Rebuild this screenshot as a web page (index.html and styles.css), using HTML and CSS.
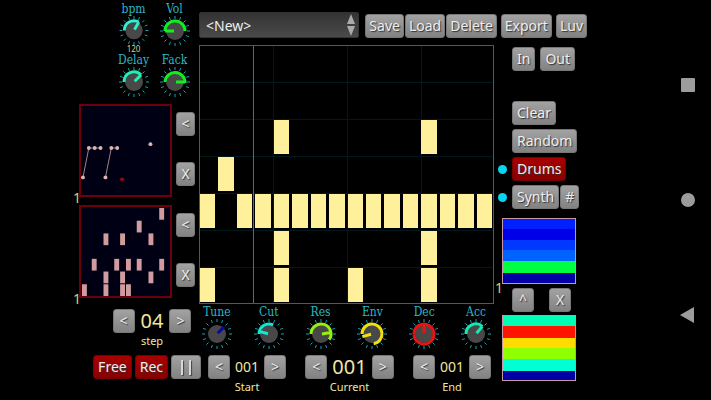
FILE: index.html
```html
<!DOCTYPE html>
<html lang="en">
<head>
    <meta charset="UTF-8">
    <meta name="viewport" content="width=device-width, initial-scale=1.0">
    <title>Step Sequencer</title>
    <link rel="stylesheet" href="styles.css">
</head>
<body>
    <div class="app">
        <section class="left">
            <div class="knobs knobs-master" id="master-knobs"></div>

            <div class="pad-row">
                <div class="pad">
                    <svg viewBox="0 0 91 91">
                        <path class="note-line" d="M2 73L8 43H20M25 73L31 43H37"/>
                        <g class="note-dot">
                            <circle cx="2" cy="73" r="2"/><circle cx="8" cy="43" r="2"/>
                            <circle cx="14" cy="43" r="2"/><circle cx="20" cy="43" r="2"/>
                            <circle cx="25" cy="73" r="2"/><circle cx="31" cy="43" r="2"/>
                            <circle cx="37" cy="43" r="2"/><circle cx="71" cy="39" r="2"/>
                        </g>
                        <circle class="note-red" cx="42" cy="75" r="2"/>
                    </svg>
                    <span class="page-number">1</span>
                </div>
                <div class="pad-buttons">
                    <button class="button small">&lt;</button>
                    <button class="button small">X</button>
                </div>
            </div>

            <div class="pad-row">
                <div class="pad">
                    <svg viewBox="0 0 91 91" id="drum-preview"></svg>
                    <span class="page-number">1</span>
                </div>
                <div class="pad-buttons">
                    <button class="button small">&lt;</button>
                    <button class="button small">X</button>
                </div>
            </div>

            <div class="counter step-counter">
                <div class="counter-row">
                    <button class="button small">&lt;</button>
                    <output class="big">04</output>
                    <button class="button small">&gt;</button>
                </div>
                <span class="caption">step</span>
            </div>

            <div class="transport">
                <button class="button button-red">Free</button>
                <button class="button button-red">Rec</button>
                <button class="button pause" aria-label="Pause"><i></i><i></i></button>
            </div>
        </section>

        <main class="main">
            <div class="topbar">
                <div class="select-box">
                    <select aria-label="Preset">
                        <option>&lt;New&gt;</option>
                    </select>
                    <svg viewBox="0 0 8 24"><path d="M4 1L8 11H0ZM4 23L8 13H0Z"/></svg>
                </div>
                <div class="file-buttons">
                    <button class="button">Save</button>
                    <button class="button">Load</button>
                    <button class="button">Delete</button>
                </div>
                <button class="button">Export</button>
                <button class="button">Luv</button>
            </div>

            <div class="content">
                <section class="center">
                    <div class="sequencer">
                        <div class="cells" id="cells"></div>
                        <div class="playhead"></div>
                    </div>
                    <div class="knobs knobs-synth" id="synth-knobs"></div>
                    <div class="counters">
                        <div class="counter">
                            <div class="counter-row">
                                <button class="button small">&lt;</button>
                                <output>001</output>
                                <button class="button small">&gt;</button>
                            </div>
                            <span class="caption">Start</span>
                        </div>
                        <div class="counter">
                            <div class="counter-row">
                                <button class="button small">&lt;</button>
                                <output class="big">001</output>
                                <button class="button small">&gt;</button>
                            </div>
                            <span class="caption">Current</span>
                        </div>
                        <div class="counter">
                            <div class="counter-row">
                                <button class="button small">&lt;</button>
                                <output>001</output>
                                <button class="button small">&gt;</button>
                            </div>
                            <span class="caption">End</span>
                        </div>
                    </div>
                </section>

                <aside class="side">
                    <div class="side-row io">
                        <button class="button">In</button>
                        <button class="button">Out</button>
                    </div>
                    <div class="side-row"><button class="button">Clear</button></div>
                    <div class="side-row"><button class="button">Random</button></div>
                    <div class="side-row active"><button class="button button-red">Drums</button></div>
                    <div class="side-row joined active">
                        <button class="button">Synth</button>
                        <button class="button">#</button>
                    </div>
                    <div class="bands bands-cold"><span class="page-number">1</span></div>
                    <div class="band-buttons">
                        <button class="button small">^</button>
                        <button class="button small">X</button>
                    </div>
                    <div class="bands bands-warm"></div>
                </aside>
            </div>
        </main>
    </div>

    <nav class="system-nav">
        <button aria-label="Recent"><svg viewBox="0 0 16 16"><rect x="1" y="1" width="14" height="14" rx="1"/></svg></button>
        <button aria-label="Home"><svg viewBox="0 0 16 16"><circle cx="8" cy="8" r="7"/></svg></button>
        <button aria-label="Back"><svg viewBox="0 0 16 16"><path d="M0 8L14 0V16Z"/></svg></button>
    </nav>

    <script src="script.js"></script>
</body>
</html>
```
FILE: styles.css
```css
* {
    box-sizing: border-box;
}

body {
    margin: 0;
    min-height: 100vh;
    display: flex;
    background-color: #000;
    font-family: "Noto Sans", "Open Sans", sans-serif;
    font-size: 14px;
    color: #f0e6a0;
}

.app {
    flex: 1;
    display: flex;
    padding: 0 75px 0 79px;
}

/* Buttons */
.button {
    height: 24px;
    padding: 0 4px;
    border: 1px solid #777;
    border-radius: 3px;
    background: linear-gradient(#a2a2a2, #828282);
    color: #eee;
    font-family: inherit;
    font-size: 14px;
    line-height: 20px;
    text-shadow: 1px 1px 1px #333;
    cursor: pointer;
}

.button.small {
    width: 22px;
    padding: 0;
}

.button-red {
    background: linear-gradient(#a80000, #880000);
    border-color: #780000;
}

/* Left column */
.left {
    width: 120px;
    flex: none;
    display: flex;
    flex-direction: column;
}

.knobs {
    display: grid;
}

.knobs-master {
    grid-template-columns: 41px 41px;
    grid-auto-rows: 51px;
    justify-content: end;
    padding: 2px 4px 0 0;
}

.knob {
    position: relative;
    display: flex;
    flex-direction: column;
    align-items: center;
    font-family: "DejaVu Serif Condensed", "DejaVu Serif", serif;
    font-size: 12px;
    line-height: 14px;
    color: #2cb6c8;
}

.knob svg {
    width: 30px;
    height: 30px;
}

.knob input {
    position: absolute;
    inset: 14px 0 auto 0;
    width: 100%;
    height: 30px;
    margin: 0;
    opacity: 0;
    cursor: pointer;
}

.knob output {
    font-family: "Noto Sans", sans-serif;
    font-size: 8px;
    line-height: 8px;
    color: #d8ce90;
}

.tick {
    stroke: #14a6b8;
}

.dial {
    fill: #484848;
}

.arc {
    fill: none;
    stroke-width: 3;
}

.pad-row {
    display: flex;
    gap: 4px;
    margin-bottom: 8px;
}

.pad {
    position: relative;
    width: 93px;
    height: 93px;
    border: 2px solid #6c000c;
    background-color: #000014;
}

.pad svg {
    display: block;
}

.note-line {
    fill: none;
    stroke: #a88488;
}

.note-dot {
    fill: #dcb4b4;
}

.note-red {
    fill: #a00018;
}

.drum-note {
    fill: #d09ca0;
}

.page-number {
    position: absolute;
    right: 100%;
    bottom: -10px;
    font-size: 14px;
    line-height: 14px;
    color: #d8ce80;
}

.pad-buttons {
    display: flex;
    flex-direction: column;
    gap: 26px;
    padding-top: 8px;
}

.pad-buttons .small {
    width: 19px;
}

.counter {
    display: flex;
    flex-direction: column;
    align-items: center;
}

.counter-row {
    display: flex;
    align-items: center;
    gap: 5px;
    height: 24px;
}

.counter output {
    font-size: 14px;
    line-height: 24px;
}

.counter output.big {
    font-size: 20px;
}

.caption {
    font-size: 11px;
    line-height: 16px;
}

.step-counter {
    margin: 3px 0 0 26px;
}

.step-counter .counter-row {
    gap: 6px;
}

.transport {
    display: flex;
    justify-content: flex-end;
    gap: 3px;
    margin: 6px -2px 0 0;
}

.pause {
    display: flex;
    justify-content: center;
    align-items: center;
    gap: 6px;
    width: 30px;
}

.pause i {
    width: 2px;
    height: 15px;
    background-color: #d8d8d8;
    box-shadow: 1px 1px 1px #444;
}

/* Main area */
.main {
    flex: 1;
    min-width: 0;
    padding-top: 12px;
}

.topbar {
    display: flex;
    align-items: flex-end;
    gap: 4px;
    margin-bottom: 7px;
    padding-right: 3px;
}

.topbar .button {
    padding: 0 3px;
}

.file-buttons {
    display: flex;
    gap: 1px;
}

.select-box {
    position: relative;
    flex: 1;
    margin-right: 2px;
}

.select-box select {
    display: block;
    width: 100%;
    height: 26px;
    padding: 0 6px;
    appearance: none;
    border: 1px solid #333;
    border-radius: 2px;
    background: linear-gradient(#333, #4a4a4a);
    color: #eee;
    font-family: inherit;
    font-size: 14px;
}

.select-box svg {
    position: absolute;
    top: 1px;
    right: 4px;
    width: 8px;
    height: 24px;
    fill: #aaa;
    pointer-events: none;
}

.content {
    display: flex;
}

.center {
    flex: 1;
    min-width: 0;
}

.sequencer {
    position: relative;
    height: 259px;
    padding: 0 1px 1px 0;
    border: 1px solid #0a7683;
    background-image:
        repeating-linear-gradient(to right, transparent 0 73px, #02191c 73px 74px),
        repeating-linear-gradient(to bottom, transparent 0 36px, #02191c 36px 37px);
}

.cells {
    display: grid;
    grid-template-columns: repeat(16, 1fr);
    grid-template-rows: repeat(7, 1fr);
    gap: 3px;
    height: 100%;
}

.cell.on {
    background-color: #fff09c;
}

.playhead {
    position: absolute;
    top: 0;
    bottom: 0;
    left: 18%;
    width: 1px;
    background-color: #0c8b9a;
}

.knobs-synth {
    grid-template-columns: repeat(6, 1fr);
    margin: 0 -8px;
    padding-top: 1px;
}

.counters {
    display: flex;
    justify-content: space-between;
    margin-top: 6px;
    padding: 0 3px 0 9px;
}

/* Side column */
.side {
    width: 96px;
    flex: none;
    padding: 2px 0 0 18px;
}

.side-row {
    position: relative;
    display: flex;
    gap: 5px;
    margin-bottom: 4px;
}

.side-row.io {
    margin-bottom: 30px;
}

.side-row.joined {
    gap: 1px;
    margin-bottom: 9px;
}

.side-row.active::before {
    content: "";
    position: absolute;
    left: -14px;
    top: 8px;
    width: 9px;
    height: 9px;
    border-radius: 50%;
    background-color: #08d4f4;
}

.side-row .button {
    padding: 0 4px;
}

.bands {
    position: relative;
    width: 74px;
    height: 66px;
    margin-left: -10px;
    border: 1px solid #c898a8;
}

.bands-cold {
    background-image: linear-gradient(#0020ff 0 15%, #0000e8 15% 33%, #0038ff 33% 49%, #0062ff 49% 66%, #00ff40 66% 85%, #0000a4 85%);
}

.bands-warm {
    background-image: linear-gradient(#00ffb4 0 16%, #ff1400 16% 34%, #ffdc00 34% 50%, #90ff00 50% 67%, #00ffd4 67% 86%, #0000a4 86%);
}

.bands .page-number {
    bottom: -12px;
    right: 72px;
}

.band-buttons {
    display: flex;
    gap: 15px;
    margin: 4px 0 3px;
}

/* System navigation */
.system-nav {
    width: 46px;
    display: flex;
    flex-direction: column;
    align-items: center;
    justify-content: center;
    gap: 99px;
}

.system-nav button {
    padding: 0;
    border: none;
    background: none;
}

.system-nav svg {
    display: block;
    width: 16px;
    height: 16px;
    fill: #9c9c9c;
}
```
FILE: script.js
```js
// arc and pointer are in degrees, clockwise from nine o'clock
const masterKnobs = [
    { name: "bpm", arc: 120, pointer: 120, color: "#30f0d0", value: "120" },
    { name: "Vol", arc: 180, pointer: 0, color: "#10f020" },
    { name: "Delay", arc: 135, pointer: 135, color: "#20f0b0" },
    { name: "Fack", arc: 185, pointer: 180, color: "#10f020" }
];
const synthKnobs = [
    { name: "Tune", arc: 0, pointer: 135, color: "#0808a0" },
    { name: "Cut", arc: 115, pointer: 15, color: "#10e8d0" },
    { name: "Res", arc: 215, pointer: 172, color: "#98f010" },
    { name: "Env", arc: 260, pointer: -15, color: "#f0e010" },
    { name: "Dec", arc: 359, pointer: 90, color: "#e81414" },
    { name: "Acc", arc: 130, pointer: 130, color: "#18e8b0" }
];

const pattern = [
    "................",
    "................",
    "....#.......#...",
    ".#..............",
    "#.##############",
    "....#.......#...",
    "#...#...#...#..."
];

const drumNotes = [
    [80, 1], [57, 14], [23, 27], [40, 27], [69, 27],
    [11, 53], [34, 53], [46, 53], [57, 53], [80, 53],
    [23, 66], [40, 66], [69, 66],
    [1, 79], [23, 79], [40, 79], [46, 79]
];

function point(degrees, radius) {
    const a = (degrees + 180) * Math.PI / 180;
    return (15 + radius * Math.cos(a)).toFixed(1) + " " + (15 + radius * Math.sin(a)).toFixed(1);
}

function drawKnobs(id, knobs) {
    const box = document.getElementById(id);
    knobs.forEach(knob => {
        let ticks = "";
        for (let d = 0; d < 360; d += 22.5) {
            ticks += `M${point(d, 12)}L${point(d, 15)}`;
        }
        const arc = knob.arc ? `M${point(0, 10)}A10 10 0 ${knob.arc > 180 ? 1 : 0} 1 ${point(knob.arc, 10)}` : "";
        const label = document.createElement("label");
        label.className = "knob";
        label.innerHTML = `
            <span>${knob.name}</span>
            <svg viewBox="0 0 30 30">
                <path class="tick" d="${ticks}"/>
                <circle class="dial" cx="15" cy="15" r="9"/>
                <path class="arc" stroke="${knob.color}" d="${arc}M${point(knob.pointer, 1)}L${point(knob.pointer, 10)}"/>
            </svg>
            <input type="range" min="0" max="360" value="${knob.arc}">
            ${knob.value ? `<output>${knob.value}</output>` : ""}
        `;
        box.appendChild(label);
    });
}

function drawCells() {
    const cells = document.getElementById("cells");
    pattern.join("").split("").forEach(step => {
        const cell = document.createElement("div");
        cell.className = step === "#" ? "cell on" : "cell";
        cell.addEventListener("click", () => cell.classList.toggle("on"));
        cells.appendChild(cell);
    });
}

drawKnobs("master-knobs", masterKnobs);
drawKnobs("synth-knobs", synthKnobs);
drawCells();
document.getElementById("drum-preview").innerHTML = drumNotes
    .map(([x, y]) => `<rect class="drum-note" x="${x}" y="${y}" width="5" height="12"/>`)
    .join("");
```
